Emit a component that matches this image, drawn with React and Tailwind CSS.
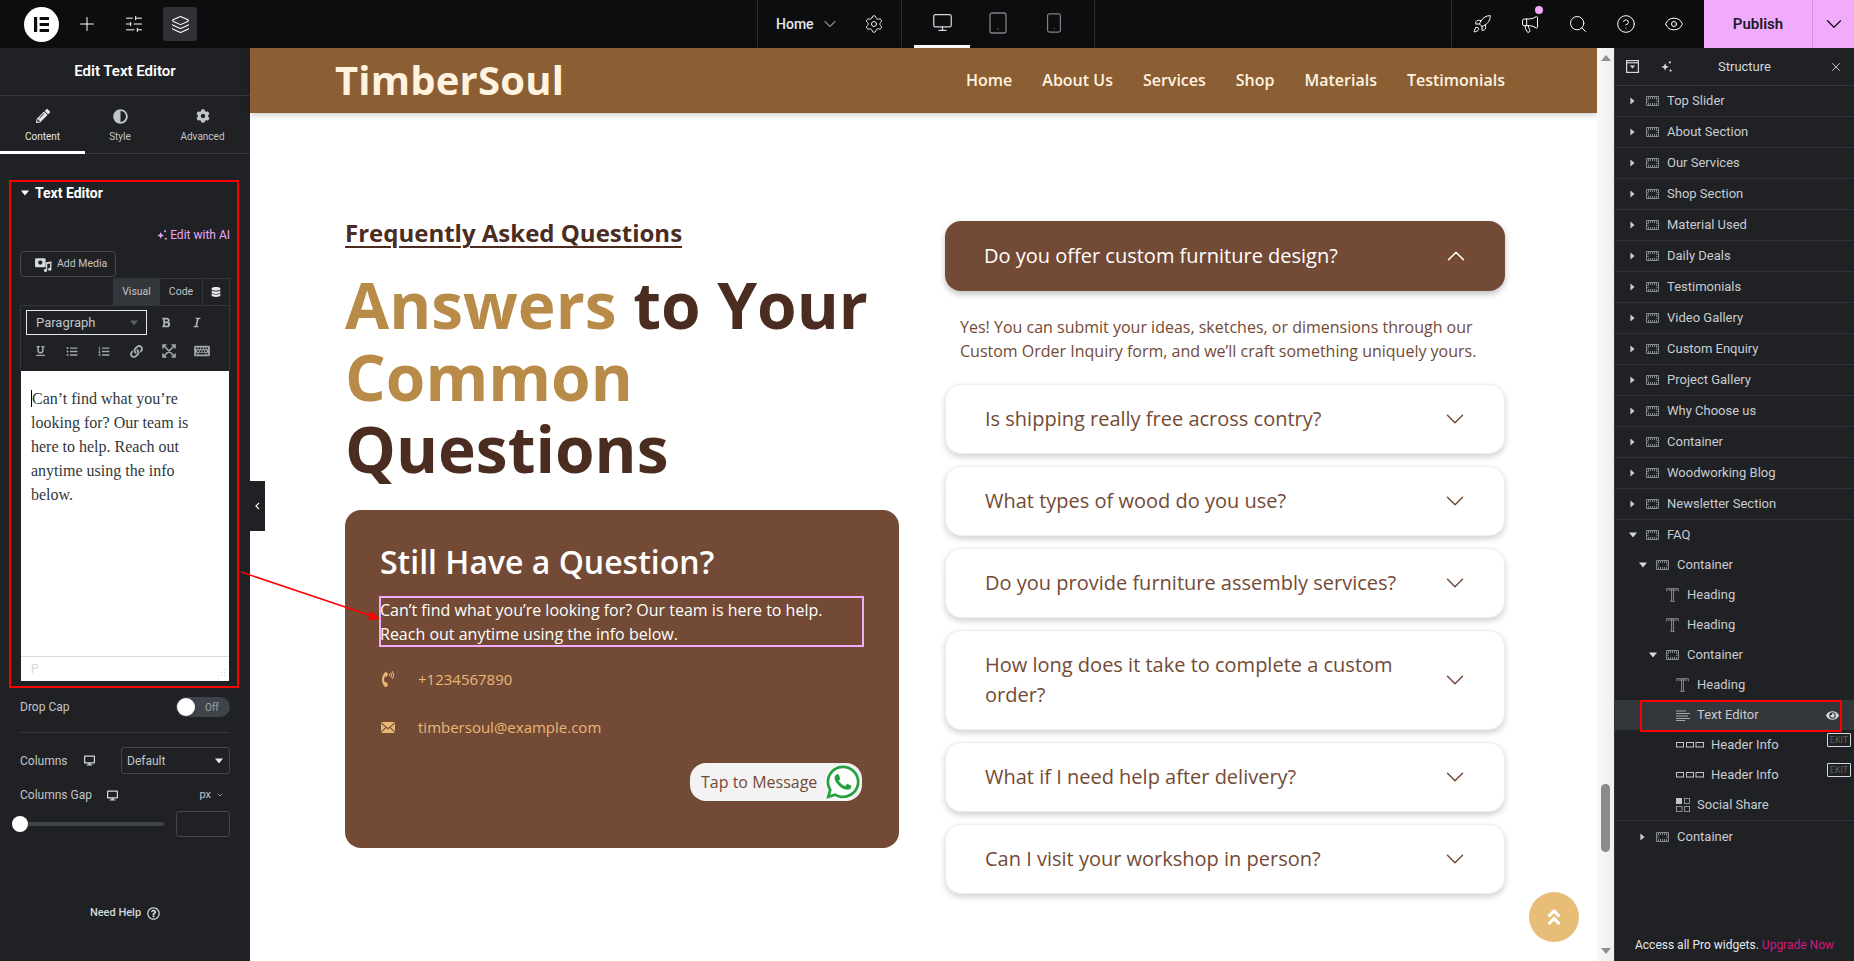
import React from 'react';
import { Plus, SlidersHorizontal, Layers, ChevronDown, ChevronUp, Settings, Monitor, Tablet, Smartphone, Rocket, Megaphone, Search, CircleHelp, Eye, X } from 'lucide-react';
import { FaPencilAlt, FaAdjust, FaCog, FaBold, FaItalic, FaUnderline, FaListUl, FaListOl, FaLink, FaDatabase, FaDesktop, FaPhoneVolume, FaWhatsapp, FaAngleDoubleUp, FaEye, FaRegQuestionCircle, FaKeyboard } from 'react-icons/fa';

const Caret = ({ dir = 'down', className = '' }) => (
  <svg viewBox="0 0 10 10" className={className} fill="currentColor">
    {dir === 'down' ? <polygon points="0,2 10,2 5,8" /> : <polygon points="2,0 8,5 2,10" />}
  </svg>
);

const Sparkle = ({ className = '' }) => (
  <svg viewBox="0 0 14 14" className={className} fill="currentColor">
    <path d="M5.5 3.5 L6.7 6.3 L9.5 7.5 L6.7 8.7 L5.5 11.5 L4.3 8.7 L1.5 7.5 L4.3 6.3 Z" />
    <circle cx="10.6" cy="2.6" r="1.2" />
    <circle cx="11.4" cy="11.4" r="1.2" />
  </svg>
);

const ContainerIcon = () => (
  <svg viewBox="0 0 13 10" className="w-[13px] h-[10px] shrink-0" fill="none" stroke="#a4a7ac">
    <path d="M0.5 0.5 H12.5 V9.5 H0.5 Z" strokeWidth="1" stroke="#85888d" />
    <path d="M2 2 H11 M2 8 H11" strokeWidth="1.6" strokeDasharray="1 1" />
    <path d="M2 3 V7 M11 3 V7" strokeWidth="1" strokeDasharray="1 1" />
  </svg>
);
const TIcon = () => (
  <svg viewBox="0 0 14 15" className="w-[13px] h-[14px] shrink-0" fill="none" stroke="#8e9197" strokeWidth="1">
    <path d="M0.7 3.5 V0.7 H13.3 V3.5 M2 2.2 H12 M6 1 V14 M8 1 V14 M4.5 14.3 H9.5" />
  </svg>
);
const LinesIcon = () => (
  <svg viewBox="0 0 14 11" className="w-[14px] h-[11px] shrink-0" stroke="#a4a7ac" strokeWidth="1">
    <path d="M0 1 H10 M0 3.5 H14 M0 6 H12 M0 8.5 H14 M0 10.5 H9" />
  </svg>
);
const InfoIcon = () => (
  <svg viewBox="0 0 28 6" className="w-[28px] h-[6px] shrink-0" fill="none" stroke="#c2c4c8">
    <rect x="0.5" y="0.5" width="7" height="4.5" />
    <rect x="10.5" y="0.5" width="7" height="4.5" />
    <rect x="20" y="0.5" width="7.5" height="4.5" />
  </svg>
);
const ShareIcon = () => (
  <svg viewBox="0 0 14 14" className="w-[14px] h-[14px] shrink-0" fill="none" stroke="#8e9197">
    <rect x="0" y="0" width="6" height="6" fill="#c2c4c8" stroke="none" />
    <rect x="8.5" y="0.5" width="5" height="5" />
    <rect x="0.5" y="8.5" width="5.5" height="5" />
    <rect x="8.5" y="8.5" width="5" height="5" />
  </svg>
);

const structure = ['Top Slider', 'About Section', 'Our Services', 'Shop Section', 'Material Used', 'Daily Deals', 'Testimonials', 'Video Gallery', 'Custom Enquiry', 'Project Gallery', 'Why Choose us', 'Container', 'Woodworking Blog', 'Newsletter Section'];

const TopRow = ({ label }) => (
  <div className="h-[31px] flex items-center pl-[14px] border-b border-[#2f3237] text-[#c9ccd1]">
    <Caret dir="right" className="w-[7px] h-[8px] text-[#c9ccd1] mr-[10px]" />
    <ContainerIcon />
    <span className="ml-[8px]">{label}</span>
  </div>
);

const SubRow = ({ pad, caret, icon, label, textGap = 'ml-[8px]' }) => (
  <div className={`h-[30px] flex items-center text-[#c9ccd1] ${pad}`}>
    <span className="w-[17px] shrink-0">{caret && <Caret className="w-[8px] h-[8px] text-[#d5d8dc]" />}</span>
    {icon}
    <span className={textGap}>{label}</span>
  </div>
);

const faqs = [
  'Is shipping really free across contry?',
  'What types of wood do you use?',
  'Do you provide furniture assembly services?',
  'How long does it take to complete a custom order?',
  'What if I need help after delivery?',
  'Can I visit your workshop in person?',
];

const nav = ['Home', 'About Us', 'Services', 'Shop', 'Materials', 'Testimonials'];

export default function App() {
  return (
    <div className="relative w-full h-screen overflow-hidden flex flex-col bg-white font-['Roboto',sans-serif]">
      {/* Top bar */}
      <div className="h-[48px] shrink-0 bg-[#0c0d0e] flex items-stretch text-white">
        <div className="w-[758px] flex items-center pl-[24px] border-r border-[#2b2d31]">
          <div className="w-[35px] h-[35px] rounded-full bg-white flex items-center justify-center">
            <svg viewBox="0 0 16 16" className="w-[15px] h-[15px]" fill="#0c0d0e">
              <rect x="0" y="0" width="3.4" height="16" />
              <rect x="6" y="0" width="10" height="3.2" />
              <rect x="6" y="6.4" width="10" height="3.2" />
              <rect x="6" y="12.8" width="10" height="3.2" />
            </svg>
          </div>
          <Plus className="w-[22px] h-[22px] ml-[17px]" strokeWidth={1.1} />
          <SlidersHorizontal className="w-[20px] h-[20px] ml-[26px]" strokeWidth={1.2} />
          <div className="w-[34px] h-[34px] ml-[19px] rounded-[3px] bg-[#2f3135] flex items-center justify-center">
            <Layers className="w-[19px] h-[19px]" strokeWidth={1.3} />
          </div>
        </div>
        <div className="w-[144px] flex items-center pl-[18px] border-r border-[#2b2d31] text-[14px] text-[#e6e8ea]">
          <span className="font-medium">Home</span>
          <ChevronDown className="w-[20px] h-[20px] ml-[6px]" strokeWidth={1.2} />
          <Settings className="w-[20px] h-[20px] ml-[24px]" strokeWidth={1.2} />
        </div>
        <div className="w-[193px] flex items-stretch pl-[12px] gap-0 border-r border-[#2b2d31]">
          <div className="w-[56px] flex items-center justify-center border-b-[3px] border-white">
            <Monitor className="w-[21px] h-[21px] text-[#d5d8dc]" strokeWidth={1.4} />
          </div>
          <div className="w-[56px] flex items-center justify-center pb-[3px]">
            <Tablet className="w-[24px] h-[24px] text-[#818388]" strokeWidth={1.3} />
          </div>
          <div className="w-[56px] flex items-center justify-center pb-[3px]">
            <Smartphone className="w-[22px] h-[22px] text-[#818388]" strokeWidth={1.3} />
          </div>
        </div>
        <div className="flex-1 flex items-center">
          <div className="flex-1" />
          <div className="h-full w-px bg-[#2b2d31]" />
        </div>
        <div className="w-[252px] flex items-center pl-[20px] gap-[28px]">
          <Rocket className="w-[20px] h-[20px]" strokeWidth={1.2} />
          <div className="relative">
            <Megaphone className="w-[20px] h-[20px]" strokeWidth={1.2} />
            <span className="absolute -top-[8px] -right-[3px] w-[8px] h-[8px] rounded-full bg-[#f0abfc]" />
          </div>
          <Search className="w-[20px] h-[20px]" strokeWidth={1.2} />
          <CircleHelp className="w-[20px] h-[20px]" strokeWidth={1.2} />
          <Eye className="w-[20px] h-[20px]" strokeWidth={1.2} />
        </div>
        <div className="w-[150px] bg-[#f0abfc] flex items-stretch text-[#0c0d0e]">
          <div className="w-[109px] flex items-center justify-center text-[15px] font-semibold text-[#1d1a2b] border-r border-[#d98fe6]">Publish</div>
          <div className="flex-1 flex items-center justify-center">
            <ChevronDown className="w-[26px] h-[26px]" strokeWidth={1.1} />
          </div>
        </div>
      </div>

      <div className="flex-1 min-h-0 flex">
        {/* Left panel */}
        <div className="w-[250px] shrink-0 bg-[#1f2124] flex flex-col text-[#c2c5ca]">
          <div className="h-[48px] shrink-0 border-b border-[#33363b] flex items-center justify-center text-white text-[15px] font-semibold">Edit Text Editor</div>
          <div className="h-[58px] shrink-0 border-b border-[#33363b] flex text-[10px]">
            <div className="w-[85px] flex flex-col items-center pt-[13px] border-b-[3px] border-white h-[58px] text-[#e6e8ea]">
              <FaPencilAlt className="w-[14px] h-[14px]" />
              <span className="mt-[6px]">Content</span>
            </div>
            <div className="w-[70px] flex flex-col items-center pt-[13px]">
              <FaAdjust className="w-[15px] h-[15px]" />
              <span className="mt-[5px]">Style</span>
            </div>
            <div className="w-[95px] flex flex-col items-center pt-[13px]">
              <FaCog className="w-[14px] h-[14px]" />
              <span className="mt-[6px]">Advanced</span>
            </div>
          </div>

          <div className="mt-[26px] mx-[9px] w-[230px] h-[508px] border-2 border-[#ff0000] flex flex-col pl-[9px] pr-[7px] shrink-0">
            <div className="h-[22px] flex items-center text-white text-[14px] font-bold pl-[1px]">
              <Caret className="w-[8px] h-[8px] mr-[6px]" />
              <span>Text Editor</span>
            </div>
            <div className="mt-[23px] h-[16px] flex items-center justify-end text-[12px] text-[#eaa6f8]">
              <Sparkle className="w-[12px] h-[12px] mr-[2px]" />
              <span>Edit with AI</span>
            </div>
            <div className="mt-[8px] w-[96px] h-[26px] border border-[#44474c] rounded-[4px] flex items-center pl-[14px] text-[10.5px]">
              <svg viewBox="0 0 16 14" className="w-[17px] h-[15px] mr-[5px]" fill="#d5d8dc">
                <rect x="0" y="1" width="10" height="8.5" rx="1.2" />
                <circle cx="5" cy="5.2" r="2" fill="#1f2124" />
                <path d="M10 5 L15.5 4 V11.5 A1.6 1.4 0 1 1 14.2 10.2 V6 L11.5 6.5 V12.5 A1.6 1.4 0 1 1 10.2 11.2 Z" />
              </svg>
              <span>Add Media</span>
            </div>
            <div className="flex justify-end h-[27px] mt-[1px] text-[10.5px]">
              <div className="w-[46px] bg-[#33363b] border-l border-t border-[#33363b] flex items-center justify-center">Visual</div>
              <div className="w-[43px] border-l border-t border-[#33363b] flex items-center justify-center">Code</div>
              <div className="w-[28px] border-x border-t border-[#33363b] flex items-center justify-center"><FaDatabase className="w-[10px] h-[10px] text-[#e6e8ea]" /></div>
            </div>
            <div className="h-[66px] border-x border-t border-[#33363b] bg-[#1f2124] pl-[5px] pt-[4px]">
              <div className="flex items-center">
                <div className="w-[121px] h-[25px] border border-[#e6e8ea] flex items-center justify-between pl-[9px] pr-[8px] text-[13px] text-[#c2c5ca]">
                  <span>Paragraph</span>
                  <Caret className="w-[8px] h-[8px] text-[#5d6066]" />
                </div>
                <FaBold className="w-[10px] h-[11px] ml-[14px] text-[#b0b3b8]" />
                <FaItalic className="w-[10px] h-[11px] ml-[21px] text-[#b0b3b8]" />
              </div>
              <div className="flex items-center mt-[9px] pl-[10px] text-[#a4a7ac]">
                <FaUnderline className="w-[9px] h-[10px]" />
                <FaListUl className="w-[12px] h-[11px] ml-[21px]" />
                <FaListOl className="w-[12px] h-[11px] ml-[20px]" />
                <FaLink className="w-[13px] h-[13px] ml-[20px]" />
                <svg viewBox="0 0 14 14" className="w-[14px] h-[14px] ml-[19px]" fill="none" stroke="currentColor" strokeWidth="1.6">
                  <path d="M2 2 L12 12 M12 2 L2 12 M1 4.5 V1 H4.5 M9.5 1 H13 V4.5 M1 9.5 V13 H4.5 M13 9.5 V13 H9.5" />
                </svg>
                <FaKeyboard className="w-[16px] h-[14px] ml-[18px]" />
              </div>
            </div>
            <div className="flex-1 bg-white flex flex-col mx-[1px] mb-[5px]">
              <div className="flex-1 px-[10px] pt-[16px] font-['Liberation_Serif',serif] text-[16px] leading-[24px] text-[#32373c]">
                <span className="border-l border-black">Can’t</span> find what you’re<br />looking for? Our team is<br />here to help. Reach out<br />anytime using the info<br />below.
              </div>
              <div className="h-[25px] border-t border-[#dcdcde] pl-[10px] text-[12px] text-[#d8d8e0] flex items-center justify-between pr-[3px]">
                <span>P</span>
                <svg viewBox="0 0 10 10" className="w-[10px] h-[10px] self-end mb-[3px]" fill="#cfcfcf"><path d="M9 1 V2 H8 V1 Z M9 4 V5 H8 V4 Z M6 4 V5 H5 V4 Z M9 7 V8 H8 V7 Z M6 7 V8 H5 V7 Z M3 7 V8 H2 V7 Z" /></svg>
              </div>
            </div>
          </div>

          <div className="mx-[20px] mt-[9px] h-[20px] flex items-center justify-between text-[12px]">
            <span>Drop Cap</span>
            <div className="w-[54px] h-[20px] rounded-full bg-[#3f444b] flex items-center">
              <span className="w-[18px] h-[18px] rounded-full bg-white ml-[1px]" />
              <span className="text-[10px] text-[#9da5ae] ml-[10px]">Off</span>
            </div>
          </div>
          <div className="mx-[20px] mt-[15px] border-t border-[#33363b]" />
          <div className="mx-[20px] mt-[14px] flex items-center justify-between text-[12px]">
            <span className="flex items-center">Columns<FaDesktop className="w-[11px] h-[11px] ml-[16px] text-[#d5d8dc]" /></span>
            <div className="w-[109px] h-[27px] border border-[#44474c] rounded-[3px] flex items-center justify-between pl-[5px] pr-[6px]">
              <span>Default</span>
              <Caret className="w-[8px] h-[8px] text-[#e6e8ea]" />
            </div>
          </div>
          <div className="mx-[20px] mt-[12px] h-[18px] flex items-center justify-between text-[12px]">
            <span className="flex items-center">Columns Gap<FaDesktop className="w-[11px] h-[11px] ml-[15px] text-[#d5d8dc]" /></span>
            <span className="flex items-center text-[11px] mr-[6px]">px<ChevronDown className="w-[8px] h-[8px] ml-[5px]" /></span>
          </div>
          <div className="mx-[12px] mt-[7px] flex items-center">
            <div className="w-[152px] relative h-[16px] flex items-center">
              <div className="ml-[8px] w-[144px] h-[4px] rounded bg-[#3f444b]" />
              <span className="absolute left-0 top-0 w-[16px] h-[16px] rounded-full bg-white" />
            </div>
            <div className="ml-[12px] w-[54px] h-[26px] border border-[#44474c] rounded-[3px]" />
          </div>
          <div className="mt-[68px] flex items-center justify-center text-[11px] font-medium text-[#d5d8dc]">
            Need Help<FaRegQuestionCircle className="w-[13px] h-[13px] ml-[6px]" />
          </div>
        </div>

        {/* Preview */}
        <div className="flex-1 min-w-0 relative flex font-['Open_Sans',sans-serif]">
          <div className="flex-1 min-w-0 bg-white">
            <div className="h-[65px] bg-[#8b5e34] shadow-[0_2px_6px_rgba(0,0,0,0.2)] flex items-center justify-between pl-[86px] pr-[92px]">
              <span className="text-[40px] font-bold text-[#fff3e0] leading-none tracking-[0.2px] -ml-[1px] -mt-[2px]">TimberSoul</span>
              <div className="flex gap-[30px] text-[16px] font-semibold text-[#fff3e0] -mt-[1px]">
                {nav.map((n) => <span key={n}>{n}</span>)}
              </div>
            </div>
            <div className="pl-[95px] pr-[92px] pt-[108px] flex gap-[46px]">
              <div className="w-[554px] shrink-0">
                <div className="text-[24px] leading-[24px] font-bold text-[#4a2c20] underline underline-offset-[4px] decoration-2">Frequently Asked Questions</div>
                <h1 className="mt-[24px] text-[64px] leading-[72px] font-bold text-[#4a2c20]">
                  <span className="text-[#b98b49]">Answers</span> to Your<br /><span className="text-[#b98b49]">Common</span><br />Questions
                </h1>
                <div className="mt-[25px] h-[338px] bg-[#734a35] rounded-[16px] pl-[35px] pr-[35px] pt-[32px]">
                  <div className="text-[32px] leading-[40px] font-semibold text-white">Still Have a Question?</div>
                  <div className="mt-[14px] h-[51px] -ml-[1px] border-2 border-[#f0abfc] text-[16px] leading-[24px] text-white">
                    <div className="-ml-[1px]">Can’t find what you’re looking for? Our team is here to help.<br />Reach out anytime using the info below.</div>
                  </div>
                  <div className="mt-[20px] h-[24px] flex items-center text-[15px] text-[#e8b877]">
                    <FaPhoneVolume className="w-[16px] h-[16px] ml-[0px]" />
                    <span className="ml-[22px]">+1234567890</span>
                  </div>
                  <div className="mt-[24px] h-[24px] flex items-center text-[15px] text-[#e8b877]">
                    <svg viewBox="0 0 14 11" className="w-[14px] h-[11px] ml-[1px]" fill="currentColor">
                      <path d="M0 0 H14 L7 6 Z M0 1.5 V9.5 L4.5 5.3 Z M14 1.5 V9.5 L9.5 5.3 Z M0 11 L5.2 6 L7 7.5 L8.8 6 L14 11 Z" />
                    </svg>
                    <span className="ml-[23px]">timbersoul@example.com</span>
                  </div>
                  <div className="mt-[24px] flex justify-end pr-[2px]">
                    <div className="w-[172px] h-[38px] rounded-[16px] bg-[#f3f3f3] flex items-center pl-[11px] text-[16px] text-[#734a35]">
                      <span>Tap to Message</span>
                      <span className="ml-[8px] w-[35px] h-[35px] rounded-full bg-white flex items-center justify-center shrink-0">
                        <FaWhatsapp className="w-[38px] h-[38px] text-[#25a23f] shrink-0" />
                      </span>
                    </div>
                  </div>
                </div>
              </div>
              <div className="w-[560px] shrink-0 flex flex-col">
                <div className="h-[70px] rounded-[16px] bg-[#734a35] shadow-[0_3px_6px_rgba(0,0,0,0.25)] flex items-center justify-between pl-[39px] pr-[34px] text-[20px] text-white">
                  <span>Do you offer custom furniture design?</span>
                  <ChevronUp className="w-[30px] h-[30px]" strokeWidth={1.2} />
                </div>
                <div className="h-[93px] pt-[24px] pl-[15px] text-[16px] leading-[24px] text-[#734a35]">
                  Yes! You can submit your ideas, sketches, or dimensions through our<br />Custom Order Inquiry form, and we’ll craft something uniquely yours.
                </div>
                <div className="flex flex-col gap-[12px]">
                  {faqs.map((q) => (
                    <div key={q} className="rounded-[16px] bg-white border border-[#eeeeee] shadow-[0_3px_6px_rgba(0,0,0,0.18)] flex items-center justify-between pl-[39px] pr-[34px] py-[19px] text-[20px] leading-[30px] text-[#734a35]">
                      <span className="w-[430px]">{q}</span>
                      <ChevronDown className="w-[30px] h-[30px] shrink-0" strokeWidth={1.2} />
                    </div>
                  ))}
                </div>
              </div>
            </div>
          </div>

          {/* Scrollbar */}
          <div className="w-[17px] shrink-0 bg-gradient-to-r from-[#f8f8f8] to-[#efefef] flex flex-col items-center justify-between py-[5px] relative">
            <Caret dir="down" className="w-[10px] h-[10px] text-[#909090] rotate-180" />
            <Caret dir="down" className="w-[10px] h-[10px] text-[#909090]" />
            <div className="absolute left-[4px] top-[736px] w-[9px] h-[68px] rounded-full bg-[#8b8b8b]" />
          </div>

          {/* Panel handle */}
          <div className="absolute left-0 top-[433px] w-[15px] h-[50px] bg-[#1f2124] flex items-center justify-center text-white">
            <svg viewBox="0 0 6 10" className="w-[5px] h-[8px]" fill="none" stroke="currentColor" strokeWidth="1.4"><path d="M5 1 L1 5 L5 9" /></svg>
          </div>

          {/* Back to top */}
          <div className="absolute left-[1279px] top-[844px] w-[50px] h-[50px] rounded-full bg-[#e8bd78] flex items-center justify-center text-white">
            <FaAngleDoubleUp className="w-[20px] h-[20px]" />
          </div>
        </div>

        {/* Structure panel */}
        <div className="w-[240px] shrink-0 relative bg-[#1f2124] flex flex-col text-[13px] border-l border-[#2f3237]">
          <div className="h-[38px] shrink-0 border-b border-[#33363b] flex items-center pl-[11px] pr-[11px] text-[#d5d8dc]">
            <svg viewBox="0 0 13 13" className="w-[13px] h-[13px]" fill="none" stroke="#d5d8dc" strokeWidth="1.2">
              <rect x="0.6" y="0.6" width="11.8" height="11.8" />
              <path d="M1 2.8 H12" />
              <polygon points="3.8,5.5 9.2,5.5 6.5,8.5" fill="#d5d8dc" stroke="none" />
            </svg>
            <Sparkle className="w-[13px] h-[13px] ml-[21px]" />
            <span className="flex-1 text-center mr-[13px]">Structure</span>
            <X className="w-[14px] h-[14px]" strokeWidth={1.5} />
          </div>
          {structure.map((l) => <TopRow key={l} label={l} />)}
          <div className="h-[30px] flex items-center pl-[14px] text-[#c9ccd1]">
            <Caret className="w-[8px] h-[8px] text-[#d5d8dc] mr-[9px]" />
            <ContainerIcon />
            <span className="ml-[8px]">FAQ</span>
          </div>
          <SubRow pad="pl-[24px]" caret icon={<ContainerIcon />} label="Container" />
          <SubRow pad="pl-[34px]" icon={<TIcon />} label="Heading" />
          <SubRow pad="pl-[34px]" icon={<TIcon />} label="Heading" />
          <SubRow pad="pl-[34px]" caret icon={<ContainerIcon />} label="Container" />
          <SubRow pad="pl-[44px]" icon={<TIcon />} label="Heading" />
          <div className="h-[30px] flex items-center pl-[61px] bg-[#33363a] text-[#c9ccd1]">
            <LinesIcon />
            <span className="ml-[7px]">Text Editor</span>
          </div>
          <SubRow pad="pl-[44px]" icon={<InfoIcon />} label="Header Info" textGap="ml-[7px]" />
          <SubRow pad="pl-[44px]" icon={<InfoIcon />} label="Header Info" textGap="ml-[7px]" />
          <SubRow pad="pl-[44px]" icon={<ShareIcon />} label="Social Share" textGap="ml-[7px]" />
          <div className="h-[32px] flex items-center pl-[24px] border-t border-[#2f3237] text-[#c9ccd1]">
            <Caret dir="right" className="w-[7px] h-[8px] text-[#c9ccd1] mr-[10px]" />
            <ContainerIcon />
            <span className="ml-[8px]">Container</span>
          </div>
          <div className="mt-auto h-[30px] flex items-center justify-center text-[12px] text-[#e6e8ea] pb-[2px]">
            Access all Pro widgets.&nbsp;<span className="text-[#d5187f]">Upgrade Now</span>
          </div>

          {/* selected outline + ekit badges */}
          <div className="absolute left-[25px] top-[652px] w-[202px] h-[32px] border-2 border-[#ff0000]" />
          <FaEye className="absolute left-[211px] top-[661px] w-[13px] h-[13px] text-[#d5d8dc]" />
          <span className="absolute left-[212px] top-[685px] w-[24px] h-[14px] border border-[#d5d8dc] rounded-[1px] text-[9px] leading-[12px] text-center text-[#5c6066]">EKIT</span>
          <span className="absolute left-[212px] top-[715px] w-[24px] h-[14px] border border-[#d5d8dc] rounded-[1px] text-[9px] leading-[12px] text-center text-[#5c6066]">EKIT</span>
        </div>
      </div>

      {/* Red annotation arrow */}
      <svg className="absolute left-0 top-0 w-full h-full pointer-events-none" viewBox="0 0 1854 961">
        <line x1="241" y1="572" x2="372" y2="616" stroke="#ff0000" strokeWidth="1.5" />
        <polygon points="380,619 368,620 371,611" fill="#ff0000" />
      </svg>
    </div>
  );
}
